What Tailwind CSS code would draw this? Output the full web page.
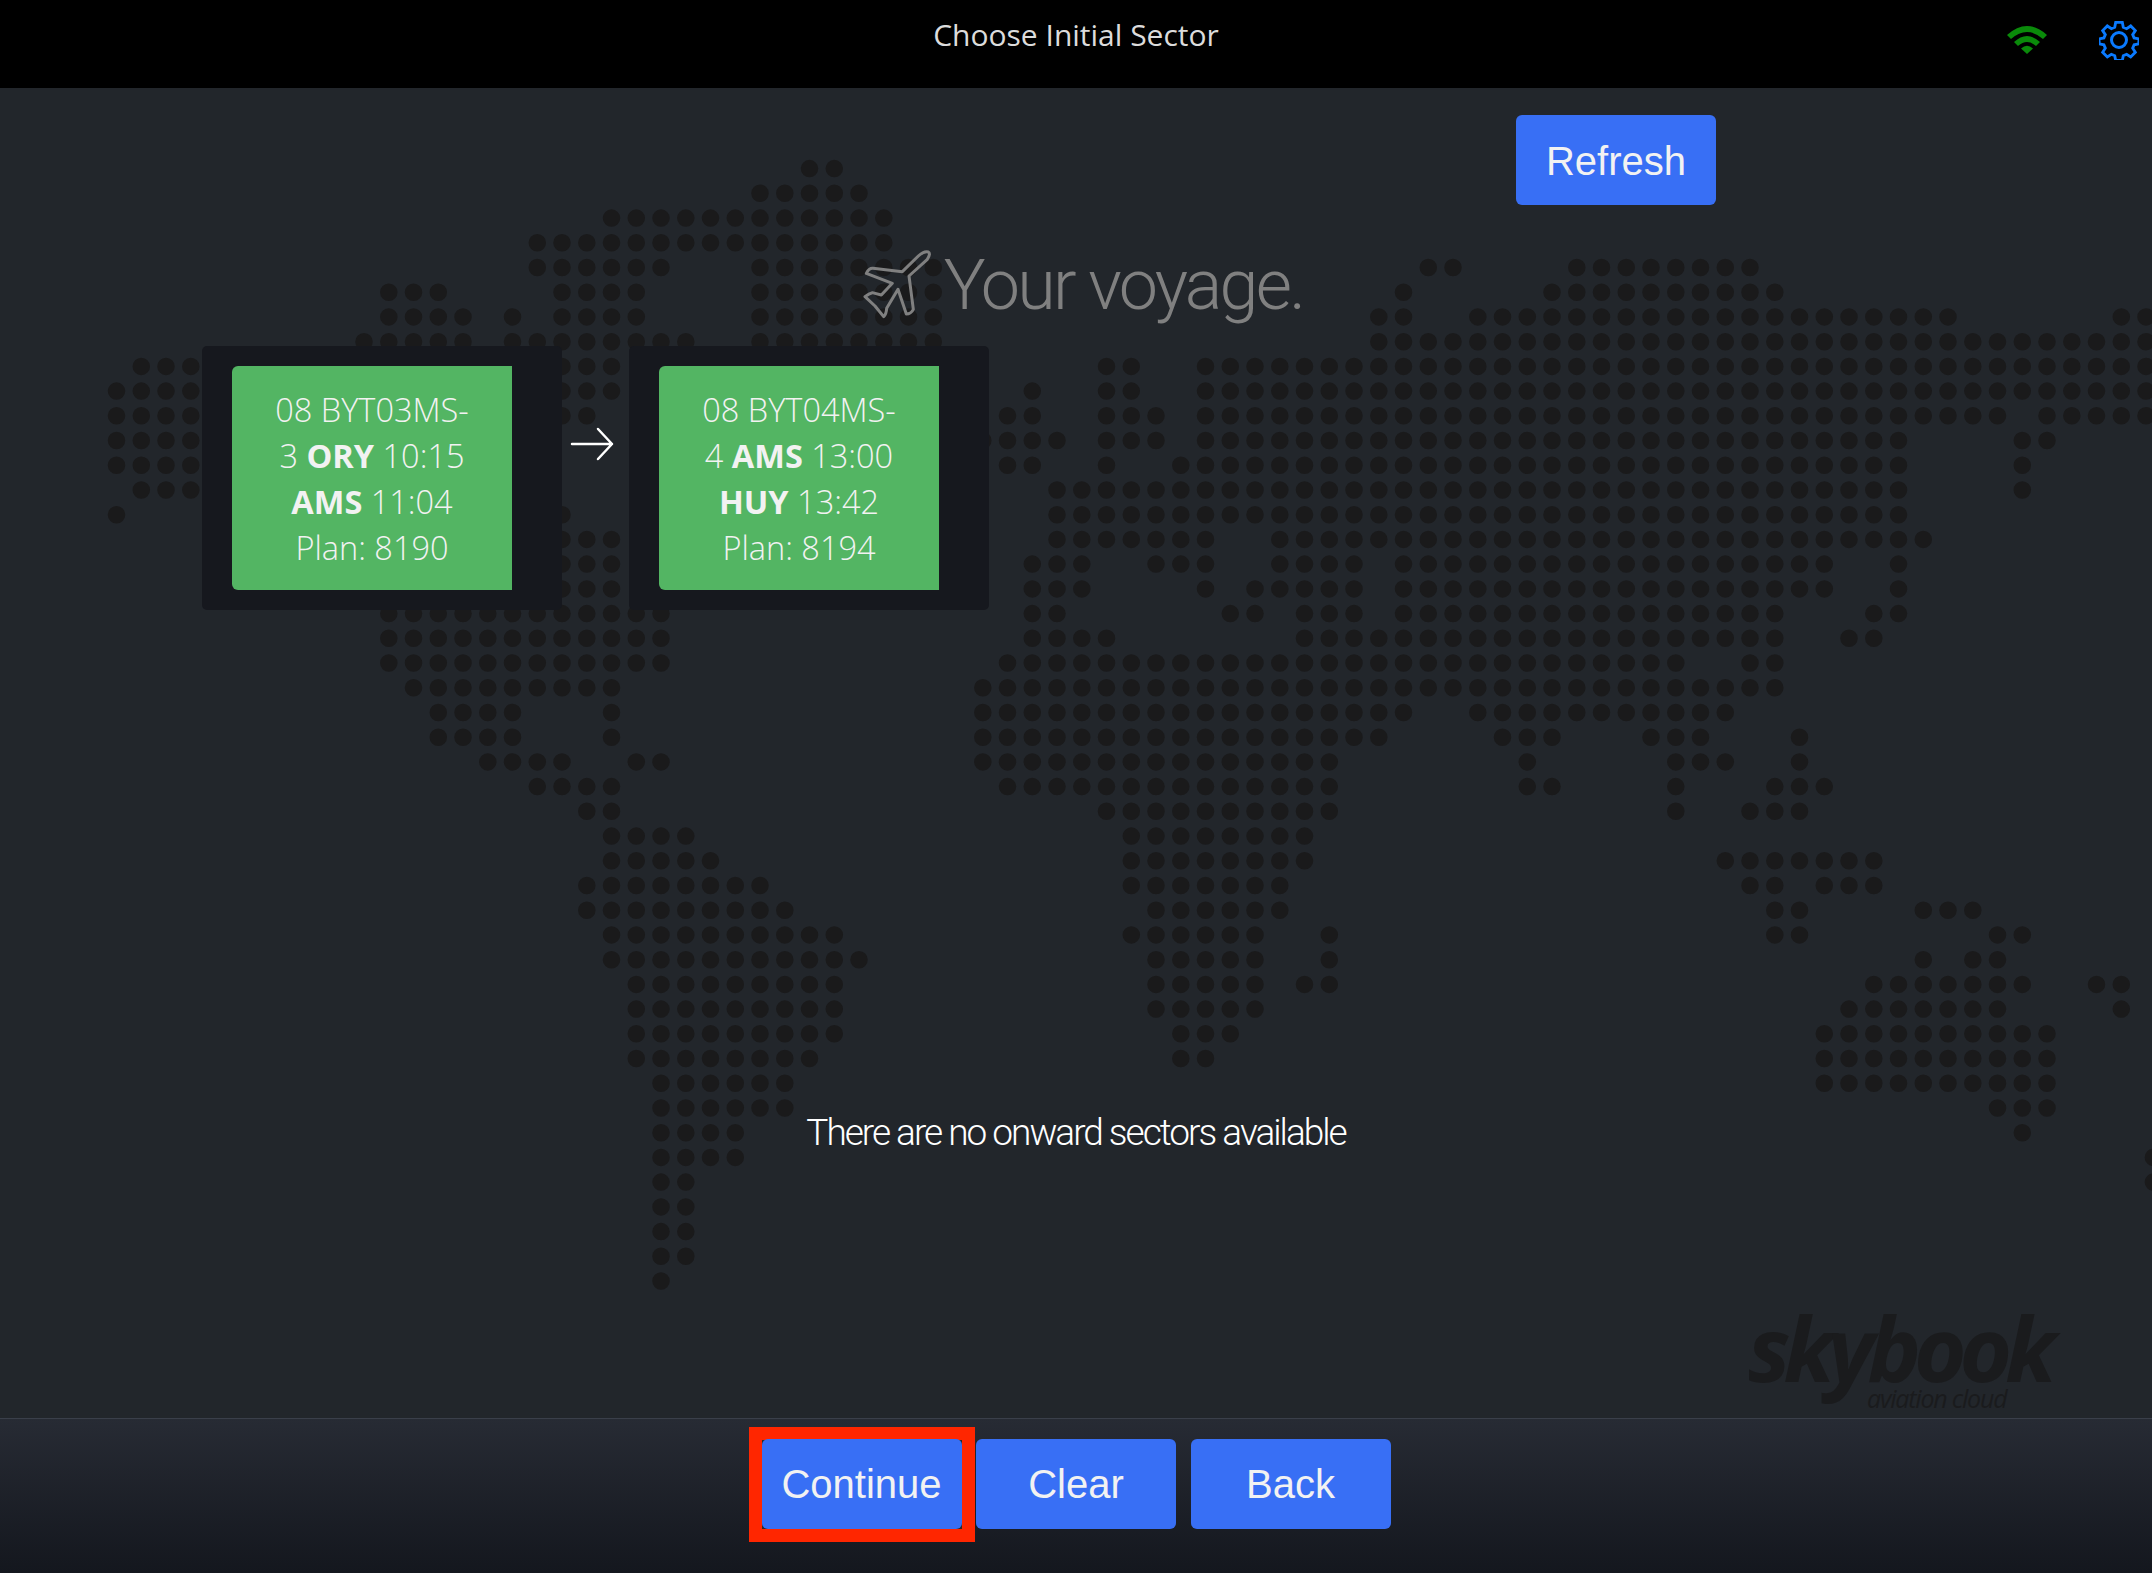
<!DOCTYPE html>
<html lang="en">
<head>
  <meta charset="UTF-8">
  <title>Choose Initial Sector</title>
  <script src="https://cdn.jsdelivr.net/npm/@tailwindcss/browser@4"></script>
</head>
<body class="relative bg-[#22262b] w-[2152px] h-[1573px] overflow-hidden flex flex-col font-['Open_Sans',sans-serif]">
  <!-- dotted world map behind everything -->
  <svg class="absolute top-0 left-0" width="2152" height="1573" viewBox="0 0 2152 1573">
    <path id="worldMap" fill="none" stroke="#1a1a1b" stroke-width="17.5" stroke-linecap="round"></path>
  </svg>

  <!-- top bar -->
  <header class="relative h-[88px] shrink-0 bg-black flex items-center justify-center">
    <h1 class="text-[30px] text-[#dcdcdc] leading-none -mt-[18px]">Choose Initial Sector</h1>
    <svg class="absolute left-[2007px] top-[26px]" width="40" height="28" viewBox="0 0 40 28">
      <path d="M0 9 Q20 -9 40 9 L36 13 Q20 -1 4 13 Z" fill="#0a8a0a"/>
      <path d="M7 16 Q20 4 33 16 L29 20 Q20 12 11 20 Z" fill="#0a8a0a"/>
      <path d="M14 22.5 Q20 17 26 22.5 L20 28 Z" fill="#0a8a0a"/>
    </svg>
    <svg class="absolute left-[2099px] top-[20px]" width="40" height="40" viewBox="0 0 40 40" fill="none" stroke="#0a7aff" stroke-width="3">
      <circle cx="20" cy="20" r="7.5"/>
      <path d="M16.5 1.5h7l1 5 3.5 1.5 4.3-2.8 4.9 4.9-2.8 4.3 1.5 3.5 5 1v5.2l-5 1-1.5 3.5 2.8 4.3-4.9 4.9-4.3-2.8-3.5 1.5-1 5h-7l-1-5-3.5-1.5-4.3 2.8-4.9-4.9 2.8-4.3-1.5-3.5-5-1v-5.2l5-1 1.5-3.5-2.8-4.3 4.9-4.9 4.3 2.8 3.5-1.5z" transform="translate(20 20) scale(.95) translate(-20 -20)"/>
    </svg>
  </header>

  <!-- sector list -->
  <main class="relative flex-1 flex flex-col">
    <div class="flex justify-end pt-[27px] pr-[436px]">
      <button class="w-[200px] h-[90px] rounded-[6px] bg-[#386ff5] text-[#f2f2f2] text-[40px] pt-[2px] font-['Liberation_Sans',sans-serif]">Refresh</button>
    </div>

    <div class="flex justify-center items-center h-[90px] mt-[35px]">
      <svg width="100" height="90" viewBox="0 0 300 270" fill="none" stroke="#808080" stroke-width="9" stroke-linejoin="round" class="-mr-[5px]">
        <path d="M208 48 L160 95 L72 85 Q60 84 52 100 L130 130 L97 165 L70 158 Q60 160 48 170 L78 198 L104 230 Q112 222 113 205 L147 148 L172 222 Q186 222 193 208 L180 108 L235 58 Q246 40 238 36 Q225 32 208 48 Z"/>
      </svg>
      <span class="text-[70px] leading-none font-light tracking-[-2.7px] text-[#808080] font-['Roboto',sans-serif]">Your voyage.</span>
    </div>

    <div class="flex pl-[202px] mt-[16px]">
      <div class="w-[360px] h-[264px] rounded-[5px] bg-[#16181e] pl-[30px] py-[20px]">
        <div class="w-[280px] h-[224px] rounded-l-[6px] bg-[#53b563] pt-[21px] text-center text-[32.5px] leading-[46px] font-light text-[#f2f2f2]">
          08 BYT03MS-<br>3 <b class="font-bold">ORY</b> 10:15<br><b class="font-bold">AMS</b> 11:04<br>Plan: 8190
        </div>
      </div>
      <div class="w-[67px] flex pl-[8px] pt-[81px]">
        <svg width="44" height="34" viewBox="0 0 44 34" fill="none" stroke="#ffffff" stroke-width="2.5" stroke-linecap="round" stroke-linejoin="round">
          <path d="M2 17 H42 M28 2 L42 17 L28 32"/>
        </svg>
      </div>
      <div class="w-[360px] h-[264px] rounded-[5px] bg-[#16181e] pl-[30px] py-[20px]">
        <div class="w-[280px] h-[224px] rounded-l-[6px] bg-[#53b563] pt-[21px] text-center text-[32.5px] leading-[46px] font-light text-[#f2f2f2]">
          08 BYT04MS-<br>4 <b class="font-bold">AMS</b> 13:00<br><b class="font-bold">HUY</b> 13:42<br>Plan: 8194
        </div>
      </div>
    </div>

    <p class="mt-[498px] h-[50px] leading-[50px] text-center text-[37px] font-light tracking-[-2px] text-white font-['Roboto',sans-serif]">There are no onward sectors available</p>

    <div class="absolute left-[1748px] top-[1223px] text-[#1a1b1d] italic">
      <div class="text-[90px] leading-[72px] font-bold tracking-[-7px]">skybook</div>
      <div class="absolute left-[119px] top-[72px] text-[25px] leading-[30px] tracking-[-1.2px] whitespace-nowrap">aviation cloud</div>
    </div>
  </main>

  <!-- bottom bar -->
  <footer class="relative h-[155px] shrink-0 border-t border-[#3a3f4a] bg-gradient-to-b from-[#272b34] to-[#14171e] flex justify-center gap-[14.5px] pt-[20px] text-[40px] text-[#f2f2f2] font-['Liberation_Sans',sans-serif]">
    <div class="relative w-[200px] h-[90px]">
      <span class="absolute -left-[13px] -right-[13px] -top-[12px] -bottom-[13px] border-[13px] border-[#ff2600] bg-[#2a2a2a]"></span>
      <button class="relative w-full h-full rounded-[6px] bg-[#386ff5]">Continue</button>
    </div>
    <button class="relative w-[200px] h-[90px] rounded-[6px] bg-[#386ff5]">Clear</button>
    <button class="relative w-[200px] h-[90px] rounded-[6px] bg-[#386ff5]">Back</button>
  </footer>

  <script>
    // dot rows of the map: first number is the row, the rest are column ranges
    const mapRows = {
      "-4": "32-33", "-3": "30-34", "-2": "24-35", "-1": "21-35",
      0: "21-26,30-37,57-58,63-70",
      1: "15-17,22-25,30-37,56,62-71",
      2: "15-18,20,22-25,30-37,55-56,59-78,85-86",
      3: "14-18,20-27,30-37,55-86",
      4: "5-7,22-24,44-45,48-86",
      5: "4-7,22-24,41,44-45,48-86",
      6: "4-7,22-23,40-41,44-46,48-80,82-86",
      7: "4-7,39-42,44-46,48-76,81-82",
      8: "4-7,40-41,44,47-76,81",
      9: "5-7,42-76,81",
      10: "4,22,42-76",
      11: "22-24,42-48,51-77",
      12: "22-24,41-43,46-48,51-54,56-73,76",
      13: "22-24,41-43,48,50-54,56-73,76",
      14: "15-26,41-42,49-50,52-54,56-71,75-76",
      15: "15-26,41-44,52-71,74-75",
      16: "15-26,40-67,70-71",
      17: "16-24,39-71",
      18: "17-20,24,39-56,59-69",
      19: "17-20,24,39-55,60-62,66-68,72",
      20: "19-22,25-26,39-53,61,67-69,72",
      21: "21-24,40-53,61-62,67,71-73",
      22: "23-24,44-53,67,70-72",
      23: "24-27,45-52",
      24: "24-28,45-52,69-75",
      25: "23-30,45-51,70-71,73-75",
      26: "23-31,46-51,71-72,77-79",
      27: "24-33,45-50,53,71-72,80-81",
      28: "24-34,46-50,53,77,79-80",
      29: "25-33,46-50,52-53,75-81,84-85",
      30: "25-33,46-50,74-80,85",
      31: "25-33,47-49,73-82",
      32: "25-32,47-48,73-82",
      33: "26-31,73-82",
      34: "26-31,80-82",
      35: "26-29,81",
      36: "26-29,86.3",
      37: "26-27,86.3",
      38: "26-27", 39: "26-27", 40: "26-27", 41: "26"
    };

    let d = "";
    for (const row in mapRows) {
      const y = 267.5 + 24.72 * Number(row);
      mapRows[row].split(",").forEach(part => {
        const [from, to] = part.split("-").map(Number);
        for (let i = from; i <= (to || from); i++) {
          d += `M${(17.5 + 24.75 * i).toFixed(1)} ${y.toFixed(1)}h0`;
        }
      });
    }
    document.getElementById("worldMap").setAttribute("d", d);
  </script>
</body>
</html>
